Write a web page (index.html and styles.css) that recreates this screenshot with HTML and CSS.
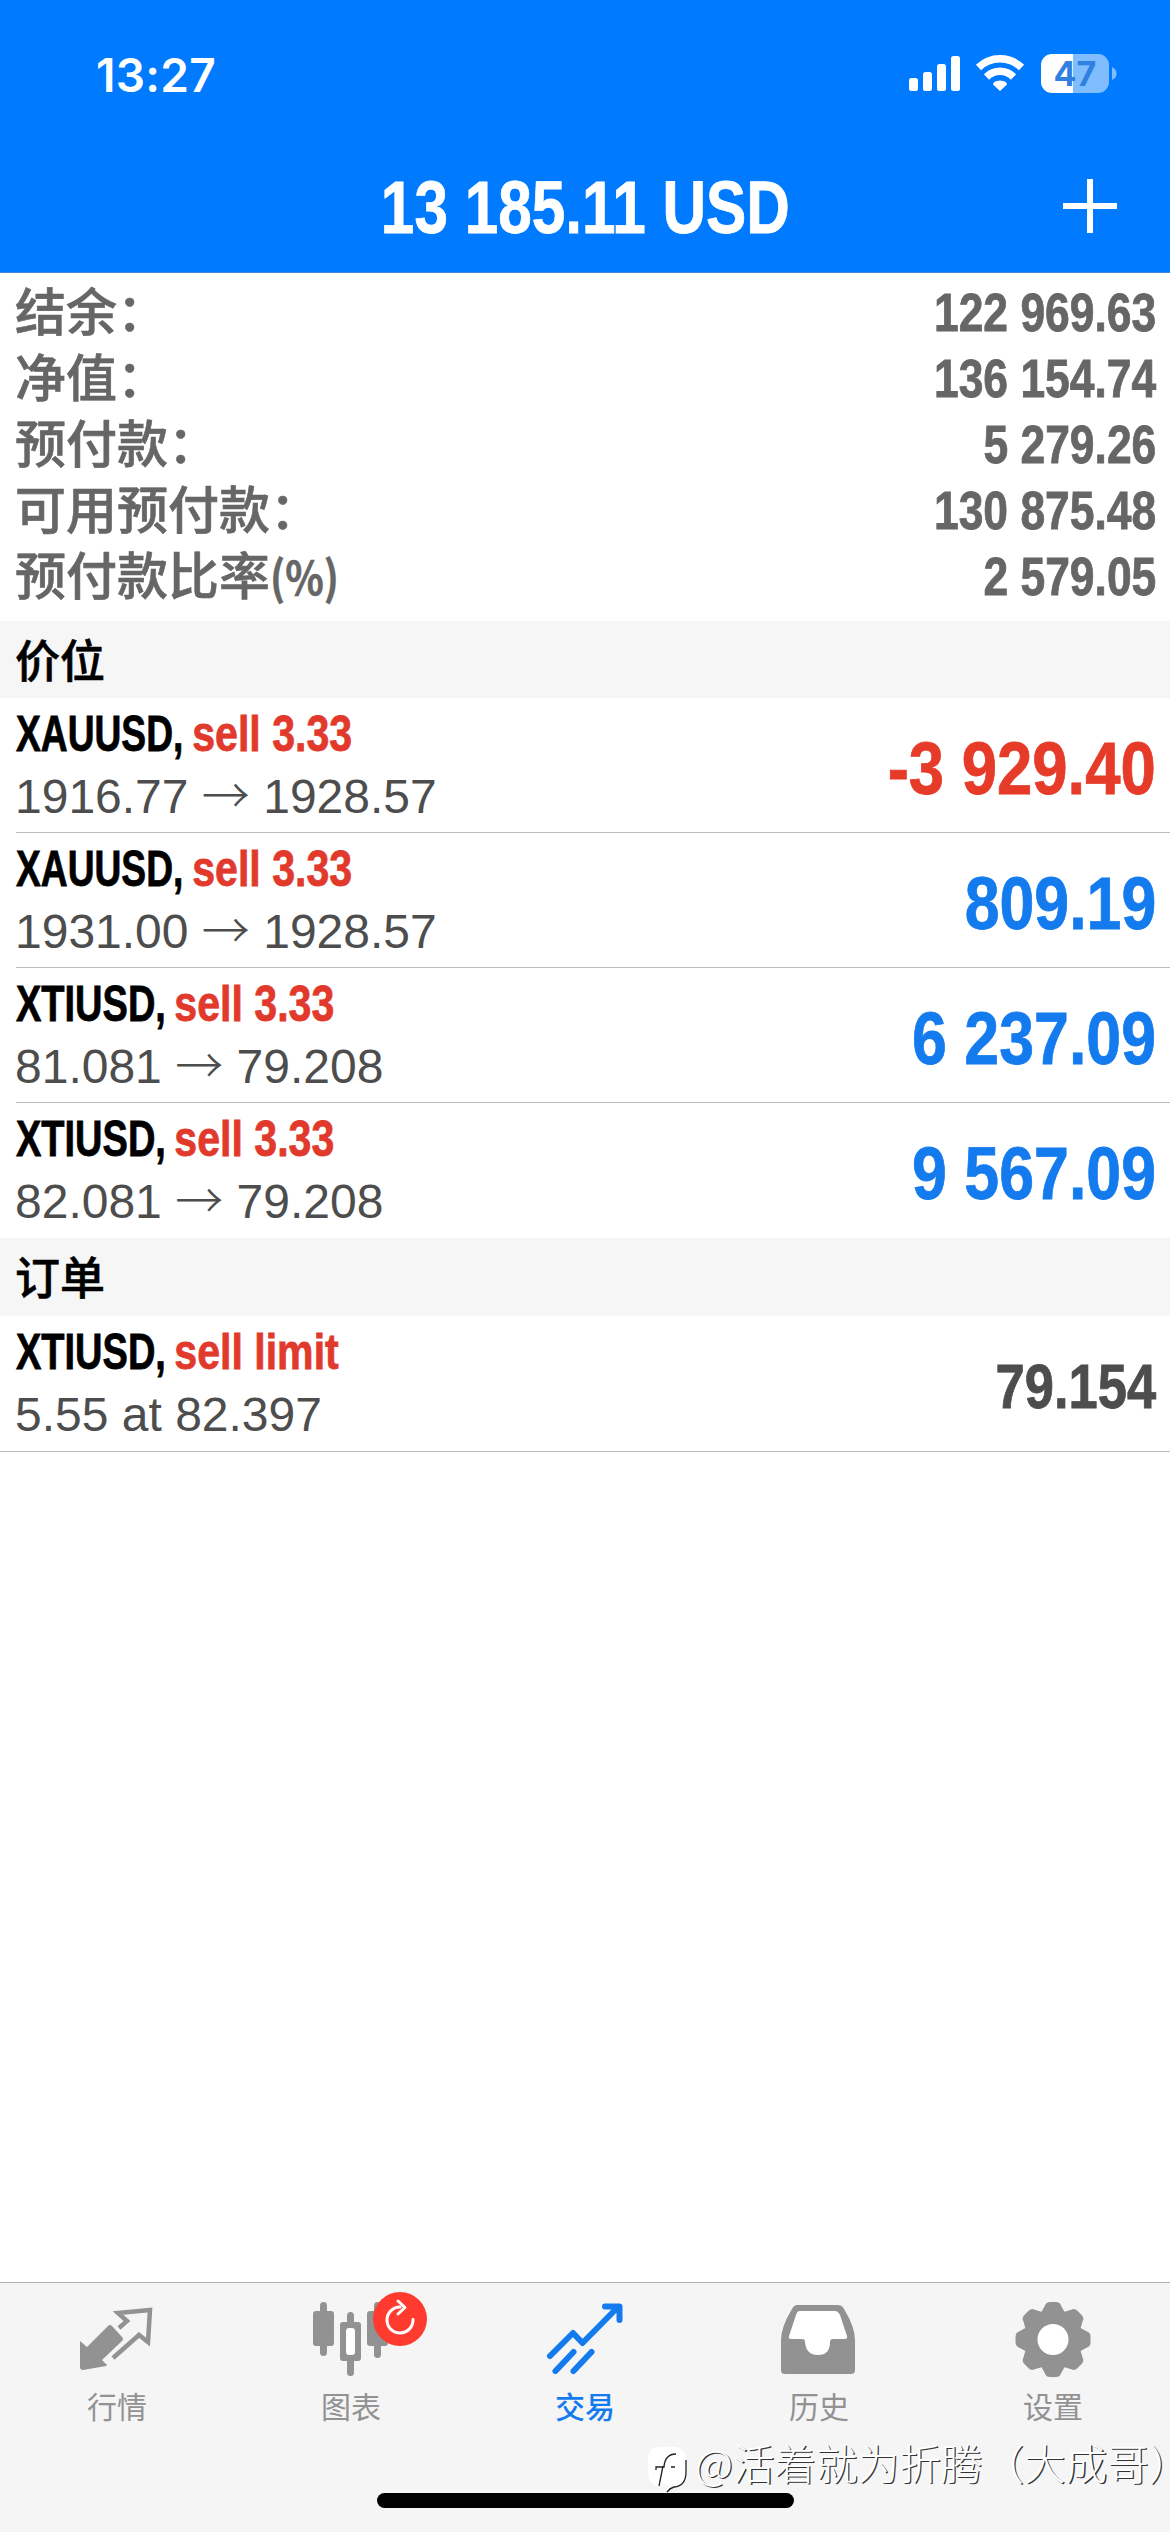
FILE: index.html
```html
<!DOCTYPE html>
<html lang="zh-CN">
<head>
<meta charset="utf-8">
<title>交易</title>
<link rel="stylesheet" href="styles.css">
</head>
<body>
<div class="app">
  <header class="header">
    <div class="status">
      <span class="time">13:27</span>
      <div class="status-icons">
        <svg class="signal" width="52" height="39" viewBox="0 0 52 39" fill="#fff"><rect x="0" y="24" width="9" height="13" rx="2.5"/><rect x="14" y="18" width="9" height="19" rx="2.5"/><rect x="28" y="10" width="9" height="27" rx="2.5"/><rect x="42" y="2" width="9" height="35" rx="2.5"/></svg>
        <svg class="wifi" width="50" height="39" viewBox="0 0 50 39"><path d="M3.500 13.500A31 31 0 0 1 46.500 13.500" fill="none" stroke="#fff" stroke-width="7.500"/><path d="M11.500 23A19 19 0 0 1 38.500 23" fill="none" stroke="#fff" stroke-width="7.500"/><path d="M25 37L18 30.500Q18 27 25 26.500Q32 27 32 30.500Z" fill="#fff"/></svg>
        <div class="battery"><span class="battery-level">47</span></div>
        <svg width="5" height="39" viewBox="0 0 5 39"><path d="M0 13Q4.500 15 4.500 19.500T0 26Z" fill="#80bdff"/></svg>
      </div>
    </div>
    <div class="titlebar">
      <h1 class="title">13 185.11 USD</h1>
      <svg class="add" width="54" height="54" viewBox="0 0 54 54" stroke="#fff" stroke-width="6"><path d="M0 27H54M27 0V54"/></svg>
    </div>
  </header>

  <section class="summary">
    <div class="sum-row"><span class="sum-label">结余：</span><span class="sum-value">122 969.63</span></div>
    <div class="sum-row"><span class="sum-label">净值：</span><span class="sum-value">136 154.74</span></div>
    <div class="sum-row"><span class="sum-label">预付款：</span><span class="sum-value">5 279.26</span></div>
    <div class="sum-row"><span class="sum-label">可用预付款：</span><span class="sum-value">130 875.48</span></div>
    <div class="sum-row"><span class="sum-label">预付款比率<span class="ratio">(%)</span></span><span class="sum-value">2 579.05</span></div>
  </section>

  <h2 class="band">价位</h2>
  <section class="rows">
    <div class="row"><div class="info"><div class="name"><span class="symbol gold">XAUUSD,</span><span class="side">sell 3.33</span></div><div class="price">1916.77 <span class="arrow">→</span> 1928.57</div></div><div class="profit loss">-3 929.40</div></div>
    <div class="row"><div class="info"><div class="name"><span class="symbol gold">XAUUSD,</span><span class="side">sell 3.33</span></div><div class="price">1931.00 <span class="arrow">→</span> 1928.57</div></div><div class="profit">809.19</div></div>
    <div class="row"><div class="info"><div class="name"><span class="symbol">XTIUSD,</span><span class="side">sell 3.33</span></div><div class="price">81.081 <span class="arrow">→</span> 79.208</div></div><div class="profit">6 237.09</div></div>
    <div class="row"><div class="info"><div class="name"><span class="symbol">XTIUSD,</span><span class="side">sell 3.33</span></div><div class="price">82.081 <span class="arrow">→</span> 79.208</div></div><div class="profit">9 567.09</div></div>
  </section>

  <h2 class="band band-orders">订单</h2>
  <section class="orders">
    <div class="row"><div class="info"><div class="name"><span class="symbol">XTIUSD,</span><span class="side">sell limit</span></div><div class="price">5.55 at 82.397</div></div><div class="profit quote">79.154</div></div>
  </section>

  <nav class="tabs">
    <div class="tab">
      <svg width="80" height="80" viewBox="0 0 80 80"><path d="M3 30L10 36L31 15Q33 13 35 15L45 26Q47 28 45 30L25 49L30 54L29 55L6 59Q3 59 3 56Z" fill="currentColor"/><path d="M42 17L50 10L41 2L73 -1L71 31L62 24L36 47" fill="none" stroke="currentColor" stroke-width="4.500"/></svg>
      <span>行情</span>
    </div>
    <div class="tab">
      <svg width="80" height="80" viewBox="0 0 80 80" fill="currentColor"><rect x="9" y="-9" width="7" height="54" rx="3.500"/><rect x="2" y="0" width="21" height="35" rx="3"/><rect x="36" y="1" width="7" height="64" rx="3.500"/><rect x="29" y="11" width="21" height="39" rx="3"/><rect x="35" y="17" width="9" height="27" rx="3" fill="#fff"/><rect x="63" y="-9" width="7" height="56" rx="3.500"/><rect x="56" y="0" width="21" height="35" rx="3"/></svg>
      <span>图表</span>
      <svg class="badge" width="54" height="54" viewBox="0 0 54 54"><circle cx="27" cy="27" r="27" fill="#ff3b30"/><path d="M27 15A13 13 0 1 0 40 27.500M25 9L32 15.500L25 22" fill="none" stroke="#fff" stroke-width="3" stroke-linecap="round" stroke-linejoin="round"/></svg>
    </div>
    <div class="tab active">
      <svg width="80" height="80" viewBox="0 0 80 80" fill="none" stroke="currentColor" stroke-width="6" stroke-linecap="round" stroke-linejoin="round"><path d="M5 45L28 22L37.500 32L73 -4M60 -4.500H74.500V9M10.500 60L28.500 41M28.500 60L46.500 41"/></svg>
      <span>交易</span>
    </div>
    <div class="tab">
      <svg width="80" height="80" viewBox="-1 -2 80 80" fill="currentColor"><path d="M17 -8H58Q62 -8 64 -4Q75 14 75 27V57Q75 61 71 61H5Q1 61 1 57V27Q1 14 12 -4Q14 -8 17 -8Z"/><path d="M20 -2H55Q58 -2 60 2L67 23Q68 26 64 26H53Q50 26 50 29Q50 42 38 42T25 29Q25 26 22 26H11Q8 26 9 23L16 2Q17 -2 20 -2Z" fill="#fff"/></svg>
      <span>历史</span>
    </div>
    <div class="tab">
      <svg width="80" height="80" viewBox="-40 -28.500 80 80" fill="currentColor"><defs><path id="tooth" d="M-14 -23L-8 -34Q-7 -37.500 -3 -37.500H3Q7 -37.500 8 -34L14 -23Z"/></defs><circle r="29"/><use href="#tooth"/><use href="#tooth" transform="rotate(45)"/><use href="#tooth" transform="rotate(90)"/><use href="#tooth" transform="rotate(135)"/><use href="#tooth" transform="rotate(180)"/><use href="#tooth" transform="rotate(225)"/><use href="#tooth" transform="rotate(270)"/><use href="#tooth" transform="rotate(315)"/><circle r="15.500" fill="#fff"/></svg>
      <span>设置</span>
    </div>
  </nav>
  <div class="watermark">
    <svg width="42" height="48" viewBox="0 0 42 48"><path d="M12 1H29Q39 3 39 16V27Q39 40 27 41Q23 42 19 46L21 39L9 40Q1 38 1 25V14Q1 1 12 1Z" fill="#fff"/><path d="M12 40L16 20M9 24V21H17Q18 8 29 8M24 21H28M39 14V26Q39 40 27 41Q23 42 20 46" fill="none" stroke="#222" stroke-width="1.300"/></svg>
    <span>@活着就为折腾（大成哥<span class="half">）</span></span>
  </div>
  <div class="home"></div>
</div>
</body>
</html>
```
FILE: styles.css
```css
* { box-sizing: border-box; }
body { margin: 0; background: #fff; }
.app {
  position: relative;
  display: flex;
  flex-direction: column;
  width: 1170px;
  height: 2532px;
  overflow: hidden;
  background: #fff;
  font-family: "Liberation Sans", "Noto Sans CJK SC", sans-serif;
  white-space: nowrap;
}
.header { height: 273px; flex: none; background: #007aff; color: #fff; border-bottom: 1px solid #3f87cf; }
.status { display: flex; justify-content: space-between; height: 146px; padding: 54px 53px 0 96px; }
.time { font: 600 46px/42px Inter, sans-serif; letter-spacing: 0.3px; }
.status-icons { display: flex; height: 42px; align-items: flex-start; }
.wifi { margin-left: 14px; }
.battery {
  display: flex; justify-content: center; align-items: center;
  width: 68px; height: 39px; margin: 0 3px 0 16px; border-radius: 11px;
  background: linear-gradient(90deg, #fff 47%, #80bdff 47%);
}
.battery-level { font: 700 34px/39px Inter, sans-serif; color: #2f80e0; }
.titlebar { display: grid; grid-template-columns: 1fr auto 1fr; align-items: center; height: 124px; padding: 0 53px; }

/* Condensed bold: Liberation Sans Bold narrowed horizontally */
.title, .sum-value, .name, .profit { font-weight: 700; -webkit-text-stroke: 0.8px currentColor; }

.title { grid-column: 2; margin: 0; font-size: 73.500px; line-height: 124px; transform: scaleX(0.82); }
.add { justify-self: end; margin-top: -4px; }

.summary { flex: none; height: 348px; padding: 6px 14px 0 15px; color: #666; }
.sum-row { display: flex; justify-content: space-between; height: 66px; }
.sum-label { font: 500 51px/60px "Noto Sans CJK SC", sans-serif; -webkit-text-stroke: 0.6px currentColor; }
.ratio { display: inline-block; font-size: 46px; font-weight: 700; transform: scaleX(0.87); transform-origin: left; }
.sum-value { font-size: 53px; line-height: 68px; transform: scaleX(0.838); transform-origin: right; }

.band { flex: none; height: 77px; margin: 0; padding-left: 15px; background: #f6f6f6; color: #000; font: 500 45px/75px "Noto Sans CJK SC", sans-serif; -webkit-text-stroke: 0.6px currentColor; }
.band-orders { height: 78px; }
.rows { padding-left: 16px; }
.row { display: flex; justify-content: space-between; height: 135px; padding-right: 14px; border-bottom: 1px solid #bcbcc0; }
.rows .row:last-child { border-bottom: 0; }
.orders .row { height: 136px; padding-left: 16px; }
.info { display: flex; flex-direction: column; padding-top: 4px; }
.name { display: flex; font-size: 49.500px; line-height: 63px; height: 62px; transform: scaleX(0.83); transform-origin: left; }
.symbol { margin-right: -4.500px; color: #000; transform: scaleX(0.925); transform-origin: left; }
.gold { margin-right: -10.500px; transform: scaleX(0.905); }
.side { color: #e13a2c; }
.price { margin-left: -1px; font-size: 48px; line-height: 66px; color: #4d4d4d; }
.arrow { font: 300 48px/0 "Noto Sans CJK SC", sans-serif; }
.profit { font-size: 74px; line-height: 141px; color: #147bee; transform: scaleX(0.847); transform-origin: right; }
.loss { color: #e63b28; transform: scaleX(0.857); }
.quote { font-size: 62.500px; line-height: 140px; color: #4d4d4d; transform: scaleX(0.84); }

.tabs { display: grid; grid-template-columns: repeat(5, 1fr); height: 250px; margin-top: auto; background: #f5f5f5; border-top: 1px solid #b0b0b0; }
.tab { position: relative; display: flex; flex-direction: column; align-items: center; padding-top: 28px; color: #929292; }
.tab svg { overflow: visible; }
.tab > span { margin-top: -8px; font: 400 30px/44px "Noto Sans CJK SC", sans-serif; }
.active { color: #147bee; }
.tab.active > span { font-weight: 500; }
.badge { position: absolute; left: 139px; top: 9px; }
.watermark { position: absolute; left: 647px; top: 2446px; display: flex; gap: 6px; color: #fff; font: 300 41.600px/33px "Noto Sans CJK SC", sans-serif; text-shadow: 1.300px 1.300px 0 #333; }
.half { font-feature-settings: "halt"; }
.home { position: absolute; left: 377px; top: 2493px; width: 417px; height: 15px; border-radius: 8px; background: #000; }
```
